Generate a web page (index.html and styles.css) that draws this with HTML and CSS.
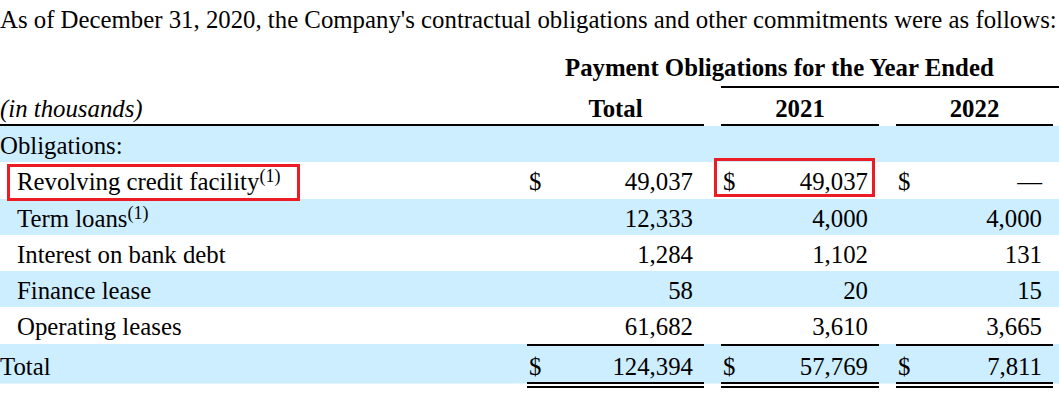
FILE: index.html
```html
<!DOCTYPE html>
<html lang="en">
<head>
<meta charset="utf-8">
<title>Contractual obligations</title>
<link rel="stylesheet" href="styles.css">
</head>
<body>
<div class="page">
  <p class="intro">As of December 31, 2020, the Company's contractual obligations and other commitments were as follows:</p>
  <div class="table">
    <div class="row head1">
      <div class="title">Payment Obligations for the Year Ended</div>
      <div class="title-rule"></div>
    </div>
    <div class="row head2">
      <div class="units ruled">(in thousands)</div>
      <div class="colhead ruled">Total</div>
      <div></div>
      <div class="colhead ruled">2021</div>
      <div></div>
      <div class="colhead ruled">2022</div>
      <div></div>
    </div>
    <div class="row body shaded">
      <div class="label">Obligations:</div>
      <div></div><div></div><div></div><div></div><div></div><div></div>
    </div>
    <div class="row body">
      <div class="label sub">Revolving credit facility<sup>(1)</sup></div>
      <div class="num"><span>$</span><span>49,037</span></div>
      <div></div>
      <div class="num"><span>$</span><span>49,037</span></div>
      <div></div>
      <div class="num"><span>$</span><span>—</span></div>
      <div></div>
    </div>
    <div class="row body shaded">
      <div class="label sub">Term loans<sup>(1)</sup></div>
      <div class="num"><span></span><span>12,333</span></div>
      <div></div>
      <div class="num"><span></span><span>4,000</span></div>
      <div></div>
      <div class="num"><span></span><span>4,000</span></div>
      <div></div>
    </div>
    <div class="row body">
      <div class="label sub">Interest on bank debt</div>
      <div class="num"><span></span><span>1,284</span></div>
      <div></div>
      <div class="num"><span></span><span>1,102</span></div>
      <div></div>
      <div class="num"><span></span><span>131</span></div>
      <div></div>
    </div>
    <div class="row body shaded">
      <div class="label sub">Finance lease</div>
      <div class="num"><span></span><span>58</span></div>
      <div></div>
      <div class="num"><span></span><span>20</span></div>
      <div></div>
      <div class="num"><span></span><span>15</span></div>
      <div></div>
    </div>
    <div class="row body">
      <div class="label sub">Operating leases</div>
      <div class="num"><span></span><span>61,682</span></div>
      <div></div>
      <div class="num"><span></span><span>3,610</span></div>
      <div></div>
      <div class="num"><span></span><span>3,665</span></div>
      <div></div>
    </div>
    <div class="row total">
      <div class="label">Total</div>
      <div class="num summed"><span>$</span><span>124,394</span></div>
      <div></div>
      <div class="num summed"><span>$</span><span>57,769</span></div>
      <div></div>
      <div class="num summed"><span>$</span><span>7,811</span></div>
      <div></div>
    </div>
  </div>
  <div class="mark mark-label"></div>
  <div class="mark mark-value"></div>
</div>
</body>
</html>
```
FILE: styles.css
```css
:root {
  --blue: #cceeff;
  --red: #ed1c24;
}

* { box-sizing: border-box; }

html, body {
  margin: 0;
  padding: 0;
  background: #ffffff;
}

body {
  font-family: "Liberation Serif", "Times New Roman", serif;
  font-size: 24.8px;
  color: #000000;
  overflow: hidden;
}

.page {
  position: relative;
  width: 1059px;
}

.intro {
  margin: 2px 0 0;
  line-height: 36px;
  white-space: nowrap;
}

.table {
  margin-top: 12px;
}

.row {
  display: grid;
  grid-template-columns: 527px 177px 17px 158px 17px 157px 6px;
  white-space: nowrap;
}

/* header rows */
.head1 > .title {
  grid-column: 2 / -1;
  grid-row: 1;
  padding: 0 0 2px 38px;
  font-weight: bold;
  line-height: 36px;
}

.head1 > .title-rule {
  grid-column: 4 / -1;
  grid-row: 1;
  border-bottom: 2px solid #000;
}

.head2 > div {
  padding-top: 5px;
  line-height: 31px;
  height: 38px;
}

.head2 > .ruled {
  border-bottom: 2px solid #000;
}

.units {
  font-style: italic;
}

.colhead {
  font-weight: bold;
  text-align: center;
}

/* body rows */
.row.body {
  height: 36.25px;
}

.row.body > div {
  padding-top: 5px;
  line-height: 30px;
}

.row.shaded {
  background: var(--blue);
}

.label.sub {
  padding-left: 17px;
}

.label sup {
  font-size: 18px;
  line-height: 0;
  vertical-align: 8px;
}

.num {
  display: flex;
  justify-content: space-between;
  padding-left: 2px;
  padding-right: 11px;
}

/* total row */
.row.total {
  background: linear-gradient(var(--blue), var(--blue)) top left / 100% 39.5px no-repeat;
}

.row.total > div {
  border-top: 2px solid transparent;
  border-bottom: 6px double transparent;
  padding-top: 6px;
  line-height: 30px;
}

.row.total > .summed {
  border-top-color: #000;
  border-bottom-color: #000;
}

/* annotation boxes */
.mark {
  position: absolute;
  border: 3px solid var(--red);
}

.mark-label {
  left: 7px;
  top: 162px;
  width: 293px;
  height: 37px;
}

.mark-value {
  left: 714px;
  top: 156px;
  width: 161px;
  height: 39px;
}
```
